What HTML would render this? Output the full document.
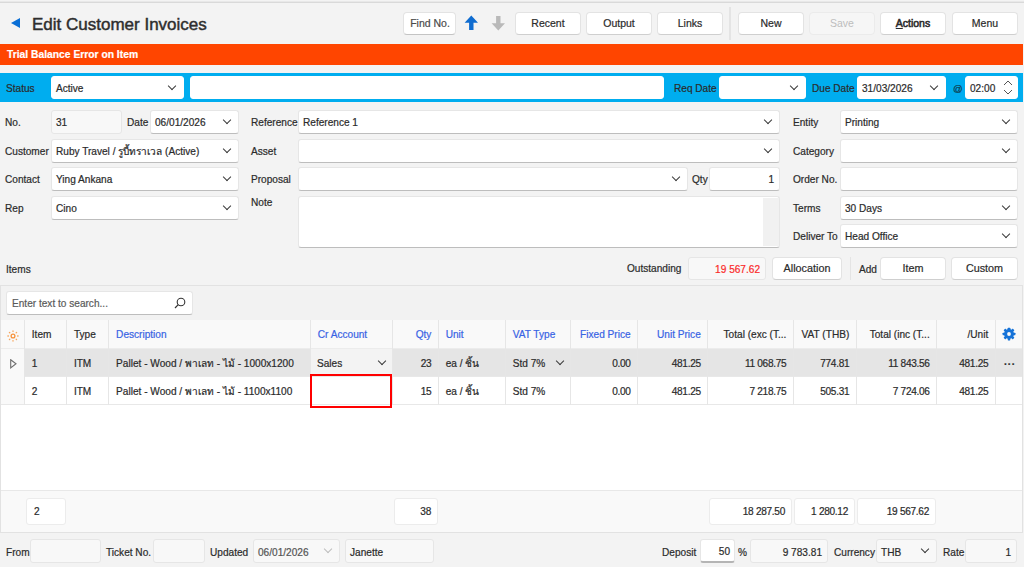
<!DOCTYPE html><html><head><meta charset="utf-8"><style>
*{box-sizing:border-box;margin:0;padding:0}
html,body{width:1024px;height:567px;overflow:hidden;background:#f3f3f3}
body{position:relative;font-family:"Liberation Sans",sans-serif;font-size:10.1px;color:#2b2b2b;-webkit-text-stroke:0.2px}
div{position:absolute;white-space:nowrap}
.topline{left:0;top:1px;width:1024px;height:2px;border-top:1px solid #e8e8e8;background:#d9d9d9}
.title{left:32px;top:15px;font-size:17px;font-weight:normal;-webkit-text-stroke:0.45px #2e2e2e;color:#2e2e2e}
.back{left:11px;top:18px;width:0;height:0;border-top:5px solid transparent;border-bottom:5px solid transparent;border-right:9px solid #0a6fd6}
.btn{background:#fff;border:1px solid #e3e3e3;border-bottom-color:#cfcfcf;border-radius:4px;text-align:center;color:#2b2b2b;font-size:10.5px}
.btn.dis{background:#f6f6f6;color:#bdbdbd;border-color:#ebebeb;-webkit-text-stroke:0}
.sep{background:#e4e4e4}
.orange{left:0;top:44px;width:1023px;height:21px;background:#ff4500;color:#fff;font-weight:bold;font-size:10.3px;line-height:22px;padding-left:7px}
.blue{left:0;top:73px;width:1023px;height:29px;background:#00adef}
.in{background:#fff;border:1px solid #e6e6e6;border-bottom-color:#bdbdbd;border-radius:3px;padding-left:4px;padding-right:5px;overflow:hidden}
.in.ro{background:#f8f8f8;border-color:#e6e6e6}
.cv{position:absolute;right:7px;width:9px;height:6px;background:none}
.cv:before{content:"";position:absolute;left:1.8px;top:-2.2px;width:5px;height:5px;border-right:1px solid #3a3a3a;border-bottom:1px solid #3a3a3a;transform:rotate(45deg)}
.lb{color:#2b2b2b}
.dimchev .cv:before{border-color:#bdbdbd}
.grid{left:0;top:285px;width:1023px;height:248px;background:#f2f2f2;border:1px solid #e2e2e2}
.gh{left:1px;top:320px;width:1021px;height:29px;background:#f9f9f9;border-bottom:1px solid #ececec}
.r1{left:1px;top:349px;width:1021px;height:28px;background:#e5e5e5;border-bottom:1px solid #e8e8e8}
.r2{left:1px;top:377px;width:1021px;height:28px;background:#fff;border-bottom:1px solid #e8e8e8}
.empty{left:1px;top:405px;width:1021px;height:85px;background:#fff}
.foot{left:1px;top:490px;width:1021px;height:42px;background:#f9f9f9;border-top:1px solid #e8e8e8}
.vl{width:1px;background:#e6e6e6}
.ct{font-size:10.3px}
.hd{color:#3863e4}
</style></head><body>
<div class="topline"></div>
<div class="back"></div>
<div class="title">Edit Customer Invoices</div>
<div class="btn" style="left:403px;top:12px;width:53px;height:23px;line-height:21px;color:#4a4a4a;border-bottom-color:#c4c4c4;padding-left:1px">Find No.</div>
<svg style="position:absolute;left:464px;top:15px" width="15" height="16" viewBox="0 0 15 16"><path d="M7.3 0.6 L14 7.8 L9.5 7.8 L9.5 15 L5.1 15 L5.1 7.8 L0.6 7.8 Z" fill="#0f6cd0"/></svg>
<svg style="position:absolute;left:491px;top:15px" width="15" height="16" viewBox="0 0 15 16"><path d="M7.3 15.4 L14 8.2 L9.5 8.2 L9.5 1 L5.1 1 L5.1 8.2 L0.6 8.2 Z" fill="#b9b9b9"/></svg>
<div class="btn" style="left:515px;top:12px;width:66px;height:23px;line-height:21px;">Recent</div>
<div class="btn" style="left:586px;top:12px;width:66px;height:23px;line-height:21px;">Output</div>
<div class="btn" style="left:657px;top:12px;width:66px;height:23px;line-height:21px;">Links</div>
<div class="btn" style="left:738px;top:12px;width:66px;height:23px;line-height:21px;">New</div>
<div class="btn dis" style="left:809px;top:12px;width:66px;height:23px;line-height:21px;">Save</div>
<div class="btn" style="left:880px;top:12px;width:66px;height:23px;line-height:21px;"><span style="-webkit-text-stroke:0.55px #2b2b2b"><u style="text-decoration-thickness:1px;text-underline-offset:1px">A</u>ctions</span></div>
<div class="btn" style="left:952px;top:12px;width:66px;height:23px;line-height:21px;">Menu</div>
<div class="sep" style="left:729px;top:7px;width:2px;height:33px"></div>
<div class="orange">Trial Balance Error on Item</div>
<div class="blue"></div>
<div class="lb" style="left:6px;top:82px;line-height:14px">Status</div>
<div class="in" style="left:51px;top:76px;width:133px;height:23px;line-height:23px;text-align:left;border-color:#fff"><span style="">Active</span><i class="cv" style="top:8.0px"></i></div>
<div class="in" style="left:190px;top:76px;width:474px;height:23px;line-height:23px;text-align:left;border-color:#fff"></div>
<div class="lb" style="left:674px;top:82px;line-height:14px">Req Date</div>
<div class="in" style="left:719px;top:76px;width:87px;height:23px;line-height:23px;text-align:left;border-color:#fff"><i class="cv" style="top:8.0px"></i></div>
<div class="lb" style="left:812px;top:82px;line-height:14px">Due Date</div>
<div class="in" style="left:857px;top:76px;width:89px;height:23px;line-height:23px;text-align:left;border-color:#fff"><span style="">31/03/2026</span><i class="cv" style="top:8.0px"></i></div>
<div class="lb" style="left:953px;top:82px;line-height:14px;font-size:9.5px;color:#0d3a4c">@</div>
<div class="in" style="left:965px;top:76px;width:53px;height:23px;line-height:23px;text-align:left;border-color:#fff;padding-left:4px"><span style="">02:00</span></div>
<svg style="position:absolute;left:1003px;top:80px" width="10" height="15" viewBox="0 0 10 15"><polyline points="1,5 5,1 9,5" fill="none" stroke="#555" stroke-width="1"/><polyline points="1,10 5,14 9,10" fill="none" stroke="#555" stroke-width="1"/></svg>
<div class="lb" style="left:5px;top:116px;line-height:14px">No.</div>
<div class="lb" style="left:5px;top:145px;line-height:14px">Customer</div>
<div class="lb" style="left:5px;top:173px;line-height:14px">Contact</div>
<div class="lb" style="left:5px;top:202px;line-height:14px">Rep</div>
<div class="in ro" style="left:51px;top:110px;width:71px;height:24px;line-height:24px;text-align:left;"><span style="">31</span></div>
<div class="lb" style="left:127px;top:116px;line-height:14px">Date</div>
<div class="in" style="left:150px;top:110px;width:89px;height:24px;line-height:24px;text-align:left;"><span style="">06/01/2026</span><i class="cv" style="top:8.5px"></i></div>
<div class="in" style="left:51px;top:139px;width:188px;height:24px;line-height:24px;text-align:left;"><span style="">Ruby Travel / รูบี้ทราเวล (Active)</span><i class="cv" style="top:8.5px"></i></div>
<div class="in" style="left:51px;top:167px;width:188px;height:24px;line-height:24px;text-align:left;"><span style="">Ying Ankana</span><i class="cv" style="top:8.5px"></i></div>
<div class="in" style="left:51px;top:196px;width:188px;height:24px;line-height:24px;text-align:left;"><span style="">Cino</span><i class="cv" style="top:8.5px"></i></div>
<div class="lb" style="left:251px;top:116px;line-height:14px">Reference</div>
<div class="lb" style="left:251px;top:145px;line-height:14px">Asset</div>
<div class="lb" style="left:251px;top:173px;line-height:14px">Proposal</div>
<div class="lb" style="left:251px;top:196px;line-height:14px">Note</div>
<div class="in" style="left:298px;top:110px;width:482px;height:24px;line-height:24px;text-align:left;"><span style="">Reference 1</span><i class="cv" style="top:8.5px"></i></div>
<div class="in" style="left:298px;top:139px;width:482px;height:24px;line-height:24px;text-align:left;"><i class="cv" style="top:8.5px"></i></div>
<div class="in" style="left:298px;top:167px;width:390px;height:24px;line-height:24px;text-align:left;"><i class="cv" style="top:8.5px"></i></div>
<div class="lb" style="left:692px;top:173px;line-height:14px">Qty</div>
<div class="in" style="left:709px;top:167px;width:71px;height:24px;line-height:24px;text-align:right;"><span style="">1</span></div>
<div class="in" style="left:298px;top:196px;width:482px;height:52px;line-height:52px;text-align:left;"></div>
<div style="left:763px;top:198px;width:16px;height:48px;background:#f1f1f1"></div>
<div class="lb" style="left:793px;top:116px;line-height:14px">Entity</div>
<div class="lb" style="left:793px;top:145px;line-height:14px">Category</div>
<div class="lb" style="left:793px;top:173px;line-height:14px">Order No.</div>
<div class="lb" style="left:793px;top:202px;line-height:14px">Terms</div>
<div class="lb" style="left:793px;top:230px;line-height:14px">Deliver To</div>
<div class="in" style="left:840px;top:110px;width:178px;height:24px;line-height:24px;text-align:left;"><span style="">Printing</span><i class="cv" style="top:8.5px"></i></div>
<div class="in" style="left:840px;top:139px;width:178px;height:24px;line-height:24px;text-align:left;"><i class="cv" style="top:8.5px"></i></div>
<div class="in" style="left:840px;top:167px;width:178px;height:24px;line-height:24px;text-align:left;"></div>
<div class="in" style="left:840px;top:196px;width:178px;height:24px;line-height:24px;text-align:left;"><span style="">30 Days</span><i class="cv" style="top:8.5px"></i></div>
<div class="in" style="left:840px;top:224px;width:178px;height:24px;line-height:24px;text-align:left;"><span style="">Head Office</span><i class="cv" style="top:8.5px"></i></div>
<div class="lb" style="left:6px;top:263px;line-height:14px">Items</div>
<div class="lb" style="left:627px;top:262px;line-height:14px">Outstanding</div>
<div class="in ro" style="left:688px;top:257px;width:78px;height:23px;line-height:23px;text-align:right;color:#fa2a2a;padding-right:5px"><span style="">19 567.62</span></div>
<div class="btn" style="left:772px;top:257px;width:70px;height:23px;line-height:21px;font-size:10.8px">Allocation</div>
<div class="sep" style="left:850px;top:257px;width:1px;height:23px"></div>
<div class="lb" style="left:859px;top:263px;line-height:14px">Add</div>
<div class="btn" style="left:880px;top:257px;width:66px;height:23px;line-height:21px;font-size:10.8px">Item</div>
<div class="btn" style="left:951px;top:257px;width:67px;height:23px;line-height:21px;font-size:10.8px">Custom</div>
<div class="grid"></div>
<div class="in" style="left:6px;top:291px;width:187px;height:24px;line-height:24px;text-align:left;line-height:23px;padding-left:5px"><span style=""><span style="color:#5a5a5a">Enter text to search...</span></span></div>
<svg style="position:absolute;left:174px;top:297px" width="12" height="12" viewBox="0 0 12 12"><circle cx="7" cy="5" r="3.8" fill="none" stroke="#333" stroke-width="1.1"/><line x1="4.3" y1="7.7" x2="1" y2="11" stroke="#333" stroke-width="1.2"/></svg>
<div class="gh"></div><div class="r1"></div><div class="r2"></div><div class="empty"></div><div class="foot"></div>
<div style="left:1px;top:349px;width:24px;height:56px;background:#f9f9f9;border-bottom:1px solid #e8e8e8"></div>
<div class="vl" style="left:24px;top:320px;height:85px"></div>
<div class="vl" style="left:66px;top:320px;height:85px"></div>
<div class="vl" style="left:108px;top:320px;height:85px"></div>
<div class="vl" style="left:310px;top:320px;height:85px"></div>
<div class="vl" style="left:392px;top:320px;height:85px"></div>
<div class="vl" style="left:438px;top:320px;height:85px"></div>
<div class="vl" style="left:505px;top:320px;height:85px"></div>
<div class="vl" style="left:570px;top:320px;height:85px"></div>
<div class="vl" style="left:637px;top:320px;height:85px"></div>
<div class="vl" style="left:707px;top:320px;height:85px"></div>
<div class="vl" style="left:793px;top:320px;height:85px"></div>
<div class="vl" style="left:856px;top:320px;height:85px"></div>
<div class="vl" style="left:936px;top:320px;height:85px"></div>
<div class="vl" style="left:995px;top:320px;height:85px"></div>
<div style="left:31.8px;top:320px;height:29px;line-height:29px;color:#2b2b2b;">Item</div>
<div style="left:73.89999999999999px;top:320px;height:29px;line-height:29px;color:#2b2b2b;">Type</div>
<div style="left:116.1px;top:320px;height:29px;line-height:29px;color:#3863e4;">Description</div>
<div style="left:317.8px;top:320px;height:29px;line-height:29px;color:#3863e4;">Cr Account</div>
<div style="left:392.5px;width:38.89999999999998px;text-align:right;top:320px;height:29px;line-height:29px;color:#3863e4;">Qty</div>
<div style="left:445.7px;top:320px;height:29px;line-height:29px;color:#3863e4;">Unit</div>
<div style="left:512.8px;top:320px;height:29px;line-height:29px;color:#3863e4;">VAT Type</div>
<div style="left:570.3px;width:60.30000000000007px;text-align:right;top:320px;height:29px;line-height:29px;color:#3863e4;">Fixed Price</div>
<div style="left:637.6px;width:63.19999999999993px;text-align:right;top:320px;height:29px;line-height:29px;color:#3863e4;">Unit Price</div>
<div style="left:707.8px;width:78.60000000000002px;text-align:right;top:320px;height:29px;line-height:29px;color:#2b2b2b;">Total (exc (T...</div>
<div style="left:793.4px;width:55.89999999999998px;text-align:right;top:320px;height:29px;line-height:29px;color:#2b2b2b;">VAT (THB)</div>
<div style="left:856.3px;width:73.40000000000009px;text-align:right;top:320px;height:29px;line-height:29px;color:#2b2b2b;">Total (inc (T...</div>
<div style="left:936.7px;width:51.59999999999991px;text-align:right;top:320px;height:29px;line-height:29px;color:#2b2b2b;">/Unit</div>
<svg style="position:absolute;left:7px;top:330px" width="12" height="12" viewBox="0 0 12 12"><circle cx="6" cy="6" r="1.9" fill="none" stroke="#f7923a" stroke-width="1.3"/><g stroke="#f7a55a" stroke-width="1.3" stroke-linecap="round"><line x1="6" y1="0.9" x2="6" y2="1.4"/><line x1="6" y1="10.6" x2="6" y2="11.1"/><line x1="0.9" y1="6" x2="1.4" y2="6"/><line x1="10.6" y1="6" x2="11.1" y2="6"/><line x1="2.4" y1="2.4" x2="2.8" y2="2.8"/><line x1="9.2" y1="9.2" x2="9.6" y2="9.6"/><line x1="2.4" y1="9.6" x2="2.8" y2="9.2"/><line x1="9.2" y1="2.8" x2="9.6" y2="2.4"/></g></svg>
<svg style="position:absolute;left:1002px;top:326.5px" width="14" height="14" viewBox="-7 -7 14 14"><g fill="#1673d8"><rect x="-1.3" y="-6.3" width="2.6" height="3" rx="0.5" transform="rotate(0)"/><rect x="-1.25" y="-6.4" width="2.5" height="3" rx="0.4" transform="rotate(45)"/><rect x="-1.25" y="-6.4" width="2.5" height="3" rx="0.4" transform="rotate(90)"/><rect x="-1.25" y="-6.4" width="2.5" height="3" rx="0.4" transform="rotate(135)"/><rect x="-1.25" y="-6.4" width="2.5" height="3" rx="0.4" transform="rotate(180)"/><rect x="-1.25" y="-6.4" width="2.5" height="3" rx="0.4" transform="rotate(225)"/><rect x="-1.25" y="-6.4" width="2.5" height="3" rx="0.4" transform="rotate(270)"/><rect x="-1.25" y="-6.4" width="2.5" height="3" rx="0.4" transform="rotate(315)"/><circle r="4.9"/></g><circle r="1.9" fill="#f9f9f9"/></svg>
<svg style="position:absolute;left:10px;top:359px" width="7" height="10" viewBox="0 0 7 10"><path d="M0.7 0.7 L6 4.8 L0.7 8.9 Z" fill="none" stroke="#6e6e6e" stroke-width="1.1"/></svg>
<div style="left:31.8px;top:350px;height:28px;line-height:28px;color:#2b2b2b;">1</div>
<div style="left:73.89999999999999px;top:350px;height:28px;line-height:28px;color:#2b2b2b;">ITM</div>
<div style="left:116.1px;top:350px;height:28px;line-height:28px;color:#2b2b2b;">Pallet - Wood / พาเลท - ไม้ - 1000x1200</div>
<div style="left:392.5px;width:38.89999999999998px;text-align:right;top:350px;height:28px;line-height:28px;color:#2b2b2b;letter-spacing:-0.3px">23</div>
<div style="left:445.7px;top:350px;height:28px;line-height:28px;color:#2b2b2b;">ea / ชิ้น</div>
<div style="left:512.8px;top:350px;height:28px;line-height:28px;color:#2b2b2b;">Std 7%</div>
<div style="left:570.3px;width:60.30000000000007px;text-align:right;top:350px;height:28px;line-height:28px;color:#2b2b2b;letter-spacing:-0.3px">0.00</div>
<div style="left:637.6px;width:63.19999999999993px;text-align:right;top:350px;height:28px;line-height:28px;color:#2b2b2b;letter-spacing:-0.3px">481.25</div>
<div style="left:707.8px;width:78.60000000000002px;text-align:right;top:350px;height:28px;line-height:28px;color:#2b2b2b;letter-spacing:-0.3px">11 068.75</div>
<div style="left:793.4px;width:55.89999999999998px;text-align:right;top:350px;height:28px;line-height:28px;color:#2b2b2b;letter-spacing:-0.3px">774.81</div>
<div style="left:856.3px;width:73.40000000000009px;text-align:right;top:350px;height:28px;line-height:28px;color:#2b2b2b;letter-spacing:-0.3px">11 843.56</div>
<div style="left:936.7px;width:51.59999999999991px;text-align:right;top:350px;height:28px;line-height:28px;color:#2b2b2b;letter-spacing:-0.3px">481.25</div>
<div style="left:31.8px;top:378px;height:28px;line-height:28px;color:#2b2b2b;">2</div>
<div style="left:73.89999999999999px;top:378px;height:28px;line-height:28px;color:#2b2b2b;">ITM</div>
<div style="left:116.1px;top:378px;height:28px;line-height:28px;color:#2b2b2b;">Pallet - Wood / พาเลท - ไม้  - 1100x1100</div>
<div style="left:392.5px;width:38.89999999999998px;text-align:right;top:378px;height:28px;line-height:28px;color:#2b2b2b;letter-spacing:-0.3px">15</div>
<div style="left:445.7px;top:378px;height:28px;line-height:28px;color:#2b2b2b;">ea / ชิ้น</div>
<div style="left:512.8px;top:378px;height:28px;line-height:28px;color:#2b2b2b;">Std 7%</div>
<div style="left:570.3px;width:60.30000000000007px;text-align:right;top:378px;height:28px;line-height:28px;color:#2b2b2b;letter-spacing:-0.3px">0.00</div>
<div style="left:637.6px;width:63.19999999999993px;text-align:right;top:378px;height:28px;line-height:28px;color:#2b2b2b;letter-spacing:-0.3px">481.25</div>
<div style="left:707.8px;width:78.60000000000002px;text-align:right;top:378px;height:28px;line-height:28px;color:#2b2b2b;letter-spacing:-0.3px">7 218.75</div>
<div style="left:793.4px;width:55.89999999999998px;text-align:right;top:378px;height:28px;line-height:28px;color:#2b2b2b;letter-spacing:-0.3px">505.31</div>
<div style="left:856.3px;width:73.40000000000009px;text-align:right;top:378px;height:28px;line-height:28px;color:#2b2b2b;letter-spacing:-0.3px">7 724.06</div>
<div style="left:936.7px;width:51.59999999999991px;text-align:right;top:378px;height:28px;line-height:28px;color:#2b2b2b;letter-spacing:-0.3px">481.25</div>
<div style="left:311px;top:349px;width:81px;height:25px;background:#f3f3f3"></div>
<div style="left:317px;top:350px;height:28px;line-height:28px">Sales</div>
<i class="cv" style="position:absolute;left:377px;right:auto;top:360px"></i>
<i class="cv" style="position:absolute;left:555px;right:auto;top:360px"></i>
<div style="left:310px;top:374px;width:82px;height:34px;border:2px solid #ff0000"></div>
<div style="left:1004px;top:352px;height:28px;line-height:26px;font-weight:bold;letter-spacing:0.5px">···</div>
<div class="in" style="left:26px;top:498px;width:40px;height:27px;line-height:27px;text-align:left;border-color:#ececec;line-height:25px;padding-left:7px"><span style="">2</span></div>
<div class="in" style="left:394px;top:498px;width:44px;height:27px;line-height:27px;text-align:right;border-color:#ececec;line-height:25px;padding-right:6px;letter-spacing:-0.3px"><span style="">38</span></div>
<div class="in" style="left:709px;top:498px;width:83px;height:27px;line-height:27px;text-align:right;border-color:#ececec;line-height:25px;padding-right:6px;letter-spacing:-0.3px"><span style="">18 287.50</span></div>
<div class="in" style="left:794px;top:498px;width:61px;height:27px;line-height:27px;text-align:right;border-color:#ececec;line-height:25px;padding-right:6px;letter-spacing:-0.3px"><span style="">1 280.12</span></div>
<div class="in" style="left:857px;top:498px;width:79px;height:27px;line-height:27px;text-align:right;border-color:#ececec;line-height:25px;padding-right:6px;letter-spacing:-0.3px"><span style="">19 567.62</span></div>
<div class="lb" style="left:6px;top:546px;line-height:14px">From</div>
<div class="in ro" style="left:30px;top:539px;width:71px;height:24px;line-height:24px;text-align:left;padding-top:1px"></div>
<div class="lb" style="left:106px;top:546px;line-height:14px">Ticket No.</div>
<div class="in ro" style="left:153px;top:539px;width:52px;height:24px;line-height:24px;text-align:left;padding-top:1px"></div>
<div class="lb" style="left:210px;top:546px;line-height:14px">Updated</div>
<div class="in ro dimchev" style="left:253px;top:539px;width:87px;height:24px;line-height:24px;text-align:left;padding-top:1px"><span style="color:#555">06/01/2026</span><i class="cv" style="top:8.5px"></i></div>
<div class="in ro" style="left:345px;top:539px;width:89px;height:24px;line-height:24px;text-align:left;padding-top:1px"><span style="">Janette</span></div>
<div class="lb" style="left:662px;top:546px;line-height:14px">Deposit</div>
<div class="in" style="left:700px;top:539px;width:35px;height:24px;line-height:24px;text-align:right;border-bottom:2px solid #b5b5b5;line-height:23px;padding-right:4px"><span style="">50</span></div>
<div class="lb" style="left:738px;top:546px;line-height:14px">%</div>
<div class="in ro" style="left:750px;top:539px;width:78px;height:24px;line-height:24px;text-align:right;padding-top:1px"><span style="">9 783.81</span></div>
<div class="lb" style="left:834px;top:546px;line-height:14px">Currency</div>
<div class="in ro" style="left:876px;top:539px;width:61px;height:24px;line-height:24px;text-align:left;padding-top:1px"><span style="">THB</span><i class="cv" style="top:8.5px"></i></div>
<div class="lb" style="left:943px;top:546px;line-height:14px">Rate</div>
<div class="in ro" style="left:965px;top:539px;width:52px;height:24px;line-height:24px;text-align:right;padding-top:1px"><span style="">1</span></div>
</body></html>
